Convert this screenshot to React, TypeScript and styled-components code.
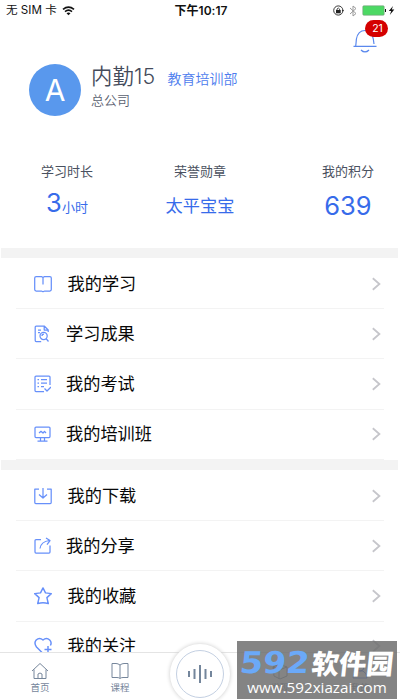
import React from "react";
import styled, { createGlobalStyle } from "styled-components";

const Global = createGlobalStyle`
  * { box-sizing: border-box; }
  body { margin: 0; background: #fff; overflow: hidden;
    font-family: Inter, "Noto Sans CJK SC", sans-serif; }
  svg { display: block; flex: none; }
`;
const Screen = styled.main`
  position: relative; width: 400px; height: 700px; overflow: hidden;
  display: flex; flex-direction: column; background: #fff;
`;
const StatusBar = styled.header`
  height: 20px; flex: none; display: grid; grid-template-columns: 1fr auto 1fr;
  align-items: center; padding: 1px 4px 0 6px; font-size: 11.6px; line-height: 19px; color: #111;
`;
const Carrier = styled.div`display: flex; align-items: center; gap: 5px;`;
const Clock = styled.div`font-weight: 600; font-size: 12px; letter-spacing: .05px;`;
const Indicators = styled.div`display: flex; align-items: center; justify-content: flex-end; gap: 5px;`;
const Profile = styled.section`
  height: 228px; flex: none; display: flex; flex-direction: column;
`;
const Alerts = styled.div`height: 44px; display: flex; justify-content: flex-end; padding: 9px 23px 0 0;`;
const Bell = styled.div`position: relative; width: 24px; height: 25px;`;
const Badge = styled.span`
  position: absolute; left: 12px; top: -9px; width: 23px; height: 17px; border-radius: 9px;
  background: #d40000; color: #fff; font-size: 10.5px; line-height: 17px; text-align: center; padding-left: 2px;
`;
const Identity = styled.div`display: flex; height: 52px; padding-left: 29px; gap: 10px;`;
const Avatar = styled.div`
  width: 52px; height: 52px; border-radius: 50%; background: #5998ed; color: #fff;
  font-size: 30px; line-height: 53px; text-align: center; font-family: Inter;
`;
const NameBlock = styled.div`display: flex; flex-direction: column; color: #444b5b;`;
const NameLine = styled.div`display: flex; align-items: center; height: 24px; gap: 12px;`;
const Name = styled.span`font-size: 21.3px; line-height: 24px; letter-spacing: .2px; font-weight: 350;`;
const Department = styled.span`font-size: 14px; line-height: 20px; padding-top: 5px; color: #4c7cee; font-weight: 350;`;
const Company = styled.span`font-size: 13px; line-height: 18px; margin-top: 3px; color: #5a6170; font-weight: 350;`;
const Stats = styled.div`
  display: grid; grid-template-columns: 134px 132px 134px; padding-top: 46px;
`;
const Stat = styled.div<{ $shift?: number }>`
  display: flex; flex-direction: column; align-items: center; font-size: 13px; line-height: 18px; color: #4a5160;
  padding-left: ${p => p.$shift ?? 0}px;
`;
const StatValue = styled.strong<{ $size: number; $top?: number }>`
  margin-top: ${p => p.$top ?? 8}px; height: 36px; display: flex; align-items: baseline; font-weight: 400; color: #376bea;
  font-size: ${p => p.$size}px; line-height: 36px;
`;
const Unit = styled.span`font-size: 13px;`;
const Divider = styled.div`height: 10px; flex: none; background: #f3f3f3; margin: 0 2px 0 1px;`;
const Menu = styled.nav`
  flex: none; height: 202px; padding: 1px 16px 0; overflow: hidden;
`;
const MenuRow = styled.a<{ $narrow?: boolean }>`
  height: 50.2px; display: flex; align-items: center; padding: 0 3px 0 17.5px;
  border-bottom: 1px solid #f3f3f3; gap: ${p => p.$narrow ? 15.5 : 16}px;
`;
const Label = styled.span`flex: 1; font-size: 17.2px; line-height: 24px; color: #080808;`;
const TabBar = styled.footer`
  position: absolute; left: 0; right: 0; bottom: 0; height: 48px; border-top: 1px solid #e4e4e4;
  display: grid; grid-template-columns: repeat(5, 80px); background: #fff;
`;
const Tab = styled.div`
  display: flex; flex-direction: column; align-items: center; padding-top: 9px; gap: 1px;
  color: #76869b; font-size: 9.5px; line-height: 14px;
`;
const Voice = styled.div`
  align-self: start; justify-self: center; margin-top: -9px; width: 60px; height: 60px; border-radius: 50%;
  border: 6px solid #fff; background: #fff; box-shadow: 0 0 4px #c9c9c9;
`;
const VoiceRing = styled.div`
  width: 48px; height: 48px; border: 1px solid #c4d0e2; border-radius: 50%; display: grid; place-items: center;
`;
const Watermark = styled.aside`
  position: absolute; left: 237px; top: 641px; width: 160px; height: 58px; background: rgba(112,112,112,.86);
  color: #fff; display: flex; flex-direction: column; align-items: center;
`;
const Brand = styled.div`
  display: flex; align-items: center; height: 34px; margin-top: 5px; width: 154px; gap: 2px;
`;
const BrandNumber = styled.span`
  width: 70px; color: #6ba9f8; font: bold 30px/32px "DejaVu Sans", sans-serif;
  transform: skewX(-6deg) scaleX(1.11); transform-origin: left center;
`;
const BrandName = styled.span`
  font: 900 27.3px/30px "Noto Sans CJK SC", sans-serif; transform: translateY(-1px) skewX(-6deg); white-space: nowrap;
`;
const Site = styled.span`font: 500 15.2px/18px "Open Sans", sans-serif; margin-top: -2px; white-space: nowrap;`;

type IconName = "book" | "result" | "exam" | "class" | "download" | "share" | "star" | "heart";
const drawings: Record<IconName, React.ReactNode> = {
  book: <path d="M7.3 16H2.2Q.7 16 .7 14.6V2.9Q.7 1.5 2.2 1.5h5.2L9 2.6l1.6-1.1h5.2q1.5 0 1.5 1.4v11.7q0 1.4-1.5 1.4h-5.1L9 16.8ZM9 2.6v6.9" />,
  result: <><path d="M14.2 7V5l-4-4H2.2q-1 0-1 1v13.5q0 1 1 1h5M10.2 1v4h4M4 5h3M4 7.5h2" /><circle cx="9.6" cy="11" r="3.6" /><path d="m12 13.5 2.5 3M8 10.9q0-1.8 2-1.8" /></>,
  exam: <path d="M16 10V2q0-1-1-1H2Q1 1 1 2v13.5q0 1 1 1h8M3.5 4.5H5M7 4.5h6M3.5 8H5M7 8h6M3.5 11.5H5M7 11.5h3M10.5 13.5l2.5 2.5 4-4" />,
  class: <path d="M2 2h13q1 0 1 1v8.5q0 1-1 1H2q-1 0-1-1V3q0-1 1-1ZM6.5 12.5V16M10.5 12.5V16M3.5 16h10M5 8l2-1.7L9 8l1.5-1.7L12 8" />,
  download: <path d="M5 2H.8v13.5q0 1 1 1h14.4q1 0 1-1V2H13M9 1v10M5 7.5 9 11l4-3.5" />,
  share: <path d="M7 2.5H2q-1 0-1 1V15q0 1 1 1h13q1 0 1-1V8.5M6 11.5Q7 4.5 15.5 3.5M12 1l4 2.5-3 4" />,
  star: <path d="m9 .9 2.5 5 5.8.7-4.4 4 1.4 6Q9 14.7 3.7 16.6l1.4-6-4.4-4 5.8-.7Z" />,
  heart: <><path d="M9 16.5 2.5 10Q-.4 6 2.2 3 5.5-.2 9 3q3.5-3.2 6.7 0 2.4 2.4.7 5.5" /><path d="M14 9v7M10.5 12.5h7" /></>
};
function MenuIcon({ name, narrow }: { name: IconName; narrow?: boolean }) {
  return <svg width={narrow ? 17 : 18} height="18" viewBox={narrow ? "0 0 17 18" : "0 0 18 18"} fill="none"
    stroke="#6790fa" strokeWidth={name === "star" || name === "heart" ? 1.45 : 1.25} strokeLinejoin="round">{drawings[name]}</svg>;
}
function Row({ icon, label, narrow }: { icon: IconName; label: string; narrow?: boolean }) {
  return <MenuRow $narrow={narrow}><MenuIcon name={icon} narrow={narrow} /><Label>{label}</Label>
    <svg width="10" height="14" viewBox="0 0 10 14" fill="none" stroke="#c6c6cb" strokeWidth="1.8"><path d="m1.8 1.3 6.6 5.7-6.6 5.7" /></svg>
  </MenuRow>;
}
export default function App() {
  return <><Global /><Screen>
    <StatusBar>
      <Carrier><span>无 SIM 卡</span>
        <svg width="13" height="10" viewBox="0 0 13 10" fill="none" stroke="#111" strokeWidth="1.7"><path d="M1 3.3Q6.5-1 12 3.3M3 5.6q3.5-2.8 7 0" /><path fill="#111" stroke="none" d="m4.5 7.2 2 2.1 2-2.1q-2-1.3-4 0Z" /></svg>
      </Carrier><Clock>下午10:17</Clock>
      <Indicators>
        <svg width="11" height="11" viewBox="0 0 11 11"><circle cx="5.3" cy="5.5" r="4.6" fill="none" stroke="#222" strokeWidth=".9" /><path d="M3 5h4.7v3.3H3z" fill="#222" /><path d="M4 5V4q1.3-2 2.6 0v1" fill="none" stroke="#222" strokeWidth=".8" /><path d="m8.8 5 1.1 1.5L11 5Z" fill="#222" /></svg>
        <svg width="8" height="12" viewBox="0 0 8 12" fill="none" stroke="#999" strokeWidth="1"><path d="m1 3 6 5.5L4 11V1l3 2.5L1 9" /></svg>
        <svg width="34" height="11" viewBox="0 0 34 11"><rect x=".8" y=".8" width="21.4" height="9.4" rx="1" fill="#4cd964" stroke="#7b9b80" strokeWidth=".6" /><path d="M23 4h1v3h-1z" fill="#111" /><path d="m31 1-4.2 5h2.4l-1.4 4 4.5-5.5h-2.5Z" fill="#111" /></svg>
      </Indicators>
    </StatusBar>
    <Profile>
      <Alerts><Bell><svg width="24" height="25" viewBox="0 0 24 25" fill="none" stroke="#5a88ed" strokeWidth="1.2"><path d="M.5 17.4h23M2.7 17q.3-2 .7-7Q5 1.5 12 1.5q7 0 8.3 8.5l.7 5M8 21q4 4 8 0" /></svg><Badge>21</Badge></Bell></Alerts>
      <Identity><Avatar>A</Avatar><NameBlock><NameLine><Name>内勤15</Name><Department>教育培训部</Department></NameLine><Company>总公司</Company></NameBlock></Identity>
      <Stats>
        <Stat><span>学习时长</span><StatValue $size={25.5} $top={5}>3<Unit>小时</Unit></StatValue></Stat>
        <Stat><span>荣誉勋章</span><StatValue $size={17.2}>太平宝宝</StatValue></Stat>
        <Stat $shift={30}><span>我的积分</span><StatValue $size={25.5}>639</StatValue></Stat>
      </Stats>
    </Profile>
    <Divider />
    <Menu>
      <Row icon="book" label="我的学习" /><Row icon="result" label="学习成果" narrow />
      <Row icon="exam" label="我的考试" narrow /><Row icon="class" label="我的培训班" narrow />
    </Menu>
    <Divider />
    <Menu>
      <Row icon="download" label="我的下载" /><Row icon="share" label="我的分享" narrow />
      <Row icon="star" label="我的收藏" /><Row icon="heart" label="我的关注" />
    </Menu>
    <TabBar>
      <Tab><svg width="18" height="18" viewBox="0 0 18 18" fill="none" stroke="currentColor" strokeWidth="1"><path d="m1 9 8-7.5L17 9M3 7.5v9h12v-9M7 16.5V12q2-2 4 0v4.5" /></svg>首页</Tab>
      <Tab><svg width="18" height="18" viewBox="0 0 18 18" fill="none" stroke="currentColor" strokeWidth="1"><path d="M9 3Q7 1.5 5 1.5H1v14h5q2 0 3 1 1-1 3-1h5v-14h-4q-2 0-4 1.5v13" /></svg>课程</Tab>
      <Voice><VoiceRing><svg width="27" height="22" viewBox="0 0 27 22" fill="none" stroke="#74869c" strokeWidth="2"><path d="M2 8v6M7.5 6v10M13 2v18M18.5 6v10M24 8v6" /></svg></VoiceRing></Voice>
      <Tab><svg width="18" height="18" viewBox="0 0 18 18" fill="none" stroke="currentColor"><path d="m2 5 6-3 8 3v9l-7 3-6-3ZM2 5l6 3 8-3M8 8v9" /></svg>发现</Tab>
      <Tab><svg width="18" height="18" viewBox="0 0 18 18" fill="none" stroke="#376bea"><circle cx="9" cy="5" r="4" /><path d="M2 16q0-5 4-7h6q4 2 4 7Z" /></svg>我的</Tab>
    </TabBar>
    <Watermark><Brand><BrandNumber>592</BrandNumber><BrandName>软件园</BrandName></Brand><Site>www.592xiazai.com</Site></Watermark>
  </Screen></>;
}
